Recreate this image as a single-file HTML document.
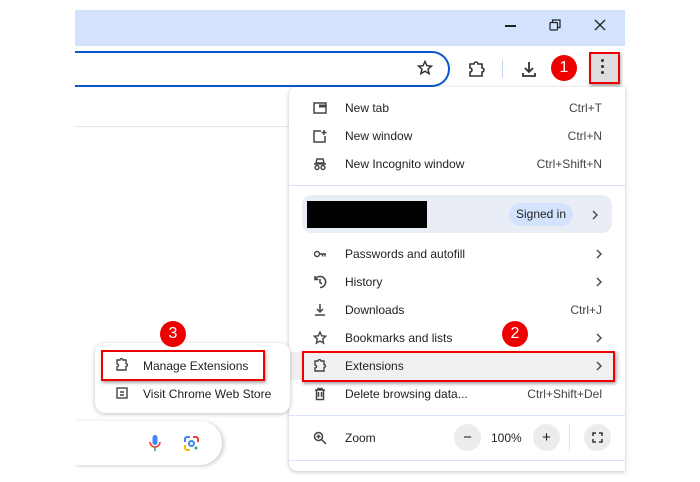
<!DOCTYPE html>
<html><head><meta charset="utf-8"><style>
body{margin:0;width:700px;height:482px;background:#fff;position:relative;overflow:hidden;font-family:"Liberation Sans",sans-serif;font-size:12px;color:#1f1f1f}
.a{position:absolute}
.item{position:absolute;left:289px;width:331px;height:28px}
.item .t{position:absolute;left:56px;top:7px}
.item .k{position:absolute;right:18px;top:7px;color:#444}
.item .ar{position:absolute;right:18px;top:9px}
.item .ic{position:absolute;left:24px;top:7px;width:14px;height:14px}
.badge{position:absolute;width:26px;height:26px;border-radius:50%;background:#e00;color:#fff;font-size:16px;text-align:center;line-height:26px}
.red{position:absolute;border:2px solid #e00;box-shadow:1px 2px 3px rgba(0,0,0,.35)}
</style></head><body>
<div class="a" style="left:75px;top:10px;width:550px;height:36px;background:#d3e3fd"></div>
<div class="a" style="left:75px;top:46px;width:550px;height:428px;background:#fff;overflow:hidden"></div>
<div class="a" style="left:224px;top:26px;width:0"></div>
<div class="a" style="left:505px;top:25px;width:11px;height:1.5px;background:#222"></div>
<svg class="a" style="left:549px;top:19px" width="12" height="12" viewBox="0 0 12 12" fill="none" stroke="#222" stroke-width="1.2"><rect x="1" y="3.5" width="7.5" height="7.5" rx="1"/><path d="M3.5 3.5V1h7.5v7.5H8.5"/></svg>
<svg class="a" style="left:594px;top:19px" width="12" height="12" viewBox="0 0 12 12" stroke="#222" stroke-width="1.3"><path d="M1 1l10 10M11 1L1 11"/></svg>
<div class="a" style="left:75px;top:51px;width:373px;height:32px;border:2px solid #0b57d0;border-radius:0 18px 18px 0;border-left:none"></div>
<svg class="a" style="left:417px;top:60px" width="16" height="16" viewBox="0 0 16 16" fill="none" stroke="#333" stroke-width="1.5"><path d="M8 1.5l1.9 4.2 4.6.4-3.5 3 1.1 4.5L8 11.2 3.9 13.6 5 9.1 1.5 6.1l4.6-.4z"/></svg>
<svg class="a" style="left:467px;top:60px" width="18" height="18" viewBox="0 0 18 18" fill="none" stroke="#333" stroke-width="1.6"><path d="M3 4h4a2 2 0 014 0h4v4a2 2 0 010 4v4H3v-4a2 2 0 000-4z"/></svg>
<div class="a" style="left:502px;top:60px;width:1px;height:18px;background:#c5d5f0"></div>
<svg class="a" style="left:520px;top:60px" width="18" height="18" viewBox="0 0 18 18" fill="none" stroke="#333" stroke-width="1.8"><path d="M9 2v10M5 8l4 4 4-4M3 13v3h12v-3"/></svg>
<div class="badge" style="left:551px;top:55px">1</div>
<div class="a" style="left:589px;top:52px;width:27px;height:28px;background:#ddd;border:2px solid #e00;box-shadow:1px 2px 3px rgba(0,0,0,.35)"></div>
<div class="a" style="left:601px;top:59px;width:3px;height:3px;border-radius:50%;background:#333;box-shadow:0 6px 0 #333,0 12px 0 #333"></div>
<div class="a" style="left:75px;top:126px;width:214px;height:1px;background:#e5e5e5"></div>
<!-- menu -->
<div class="a" style="left:289px;top:87px;width:336px;height:384px;background:#fff;border-radius:8px 0 0 8px;box-shadow:0 1px 4px rgba(0,0,0,.25)"></div>
<div class="item" style="top:94px"><svg class="ic" viewBox="0 0 14 14" fill="none" stroke="#444" stroke-width="1.5"><rect x="1" y="2" width="12" height="10"/><path d="M6 5h7" stroke-width="3"/></svg><span class="t">New tab</span><span class="k">Ctrl+T</span></div>
<div class="item" style="top:122px"><svg class="ic" viewBox="0 0 14 14" fill="none" stroke="#444" stroke-width="1.5"><path d="M8 2H1v11h11V7M11 1v5M8.5 3.5h5"/></svg><span class="t">New window</span><span class="k">Ctrl+N</span></div>
<div class="item" style="top:150px"><svg class="ic" viewBox="0 0 14 14" fill="none" stroke="#444" stroke-width="1.4"><path d="M4 2h6l1 4H3zM1 7h12"/><circle cx="4" cy="10.5" r="2"/><circle cx="10" cy="10.5" r="2"/></svg><span class="t">New Incognito window</span><span class="k">Ctrl+Shift+N</span></div>
<div class="a" style="left:289px;top:185px;width:336px;height:1px;background:#d8e2f5"></div>
<div class="a" style="left:302px;top:195px;width:310px;height:38px;background:#e9eef6;border-radius:10px"></div>
<div class="a" style="left:307px;top:201px;width:120px;height:27px;background:#000"></div>
<div class="a" style="left:509px;top:203px;width:64px;height:23px;background:#d3e3fd;border-radius:12px;text-align:center;line-height:23px">Signed in</div>
<svg class="a" style="left:592px;top:210px" width="6" height="10" viewBox="0 0 6 10" fill="none" stroke="#444" stroke-width="1.4"><path d="M1 1l4 4-4 4"/></svg>
<div class="item" style="top:240px"><svg class="ic" viewBox="0 0 14 14" fill="none" stroke="#444" stroke-width="1.4"><circle cx="4" cy="7" r="2.5"/><path d="M6.5 7H13M9.5 7v2.5M12 7v2.5"/></svg><span class="t">Passwords and autofill</span><svg class="ar" width="6" height="10" viewBox="0 0 6 10" fill="none" stroke="#444" stroke-width="1.4"><path d="M1 1l4 4-4 4"/></svg></div>
<div class="item" style="top:268px"><svg class="ic" viewBox="0 0 14 14" fill="none" stroke="#444" stroke-width="1.6"><path d="M2.5 4A5.5 5.5 0 117 12.5M2 1v3.5h3.5M7 4v3.5l2 1.5"/></svg><span class="t">History</span><svg class="ar" width="6" height="10" viewBox="0 0 6 10" fill="none" stroke="#444" stroke-width="1.4"><path d="M1 1l4 4-4 4"/></svg></div>
<div class="item" style="top:296px"><svg class="ic" viewBox="0 0 14 14" fill="none" stroke="#444" stroke-width="1.5"><path d="M7 1v8M4 6l3 3 3-3M2 12h10"/></svg><span class="t">Downloads</span><span class="k">Ctrl+J</span></div>
<div class="item" style="top:324px"><svg class="ic" viewBox="0 0 14 14" fill="none" stroke="#444" stroke-width="1.4"><path d="M7 1l1.7 3.8 4.1.4-3.1 2.8.9 4.1L7 10 3.4 12.1l.9-4.1-3.1-2.8 4.1-.4z"/></svg><span class="t">Bookmarks and lists</span><svg class="ar" width="6" height="10" viewBox="0 0 6 10" fill="none" stroke="#444" stroke-width="1.4"><path d="M1 1l4 4-4 4"/></svg></div>
<div class="item" style="top:352px;background:#f0f0f0"><svg class="ic" viewBox="0 0 14 14" fill="none" stroke="#444" stroke-width="1.4"><path d="M2 2h3a1.5 1.5 0 013 0h3v3.5a1.5 1.5 0 010 3V12H2V9a1.5 1.5 0 000-3z"/></svg><span class="t">Extensions</span><svg class="ar" width="6" height="10" viewBox="0 0 6 10" fill="none" stroke="#444" stroke-width="1.4"><path d="M1 1l4 4-4 4"/></svg></div>
<div class="red" style="left:302px;top:351px;width:309px;height:27px"></div>
<div class="item" style="top:380px"><svg class="ic" viewBox="0 0 14 14" fill="none" stroke="#444" stroke-width="1.5"><path d="M2 3h10M5 3V1.5h4V3M3.5 3v9.5h7V3M5.5 5v5M8.5 5v5"/></svg><span class="t">Delete browsing data...</span><span class="k">Ctrl+Shift+Del</span></div>
<div class="a" style="left:289px;top:415px;width:336px;height:1px;background:#d8e2f5"></div>
<div class="item" style="top:424px"><svg class="ic" viewBox="0 0 14 14" fill="none" stroke="#444" stroke-width="1.5"><circle cx="5.5" cy="5.5" r="4"/><path d="M8.5 8.5L13 13M5.5 3.5v4M3.5 5.5h4"/></svg><span class="t">Zoom</span></div>
<div class="a" style="left:454px;top:424px;width:27px;height:27px;border-radius:50%;background:#ececec;text-align:center;line-height:27px;font-size:15px">−</div>
<div class="a" style="left:491px;top:431px">100%</div>
<div class="a" style="left:533px;top:424px;width:27px;height:27px;border-radius:50%;background:#ececec;text-align:center;line-height:27px;font-size:15px">+</div>
<div class="a" style="left:569px;top:424px;width:1px;height:27px;background:#d8e2f5"></div>
<div class="a" style="left:584px;top:424px;width:27px;height:27px;border-radius:50%;background:#ececec"></div>
<svg class="a" style="left:592px;top:432px" width="11" height="11" viewBox="0 0 11 11" fill="none" stroke="#333" stroke-width="1.5"><path d="M1 4V1h3M7 1h3v3M10 7v3H7M4 10H1V7"/></svg>
<div class="a" style="left:289px;top:460px;width:336px;height:1px;background:#d8e2f5"></div>
<!-- search box -->
<div class="a" style="left:75px;top:421px;width:147px;height:44px;background:#fff;border-radius:0 22px 22px 0;box-shadow:2px 1px 4px rgba(0,0,0,.2);clip-path:inset(-6px -6px -6px 0)"></div>
<svg class="a" style="left:148px;top:434px" width="14" height="18" viewBox="0 0 14 18"><rect x="4.5" y="1" width="5" height="10" rx="2.5" fill="#4285f4"/><path d="M2 8a5 5 0 0010 0" stroke="#ea4335" stroke-width="1.6" fill="none"/><path d="M7 13v4" stroke="#34a853" stroke-width="1.6"/></svg>
<svg class="a" style="left:183px;top:435px" width="17" height="17" viewBox="0 0 17 17" fill="none" stroke-width="2"><path d="M2 7V4a2 2 0 012-2h3" stroke="#4285f4"/><path d="M10 2h3a2 2 0 012 2v3" stroke="#ea4335"/><path d="M2 10v3a2 2 0 002 2h3" stroke="#fbbc04"/><circle cx="8.5" cy="8.5" r="2.5" stroke="#4285f4"/><circle cx="13" cy="13" r="1.5" fill="#34a853" stroke="none"/></svg>
<!-- submenu -->
<div class="a" style="left:95px;top:343px;width:195px;height:70px;background:#fff;border-radius:10px;box-shadow:0 1px 5px rgba(0,0,0,.25)"></div>
<svg class="a" style="left:115px;top:358px" width="14" height="14" viewBox="0 0 14 14" fill="none" stroke="#444" stroke-width="1.4"><path d="M2 2h3a1.5 1.5 0 013 0h3v3.5a1.5 1.5 0 010 3V12H2V9a1.5 1.5 0 000-3z"/></svg>
<div class="a" style="left:143px;top:359px">Manage Extensions</div>
<div class="red" style="left:101px;top:350px;width:160px;height:27px"></div>
<svg class="a" style="left:115px;top:386px" width="14" height="14" viewBox="0 0 14 14" fill="none" stroke="#444" stroke-width="1.4"><rect x="2" y="2" width="10" height="10"/><path d="M5 6h4M5 9h4"/></svg>
<div class="a" style="left:143px;top:387px">Visit Chrome Web Store</div>
<div class="badge" style="left:160px;top:321px">3</div>
<div class="badge" style="left:502px;top:321px">2</div>
</body></html>
